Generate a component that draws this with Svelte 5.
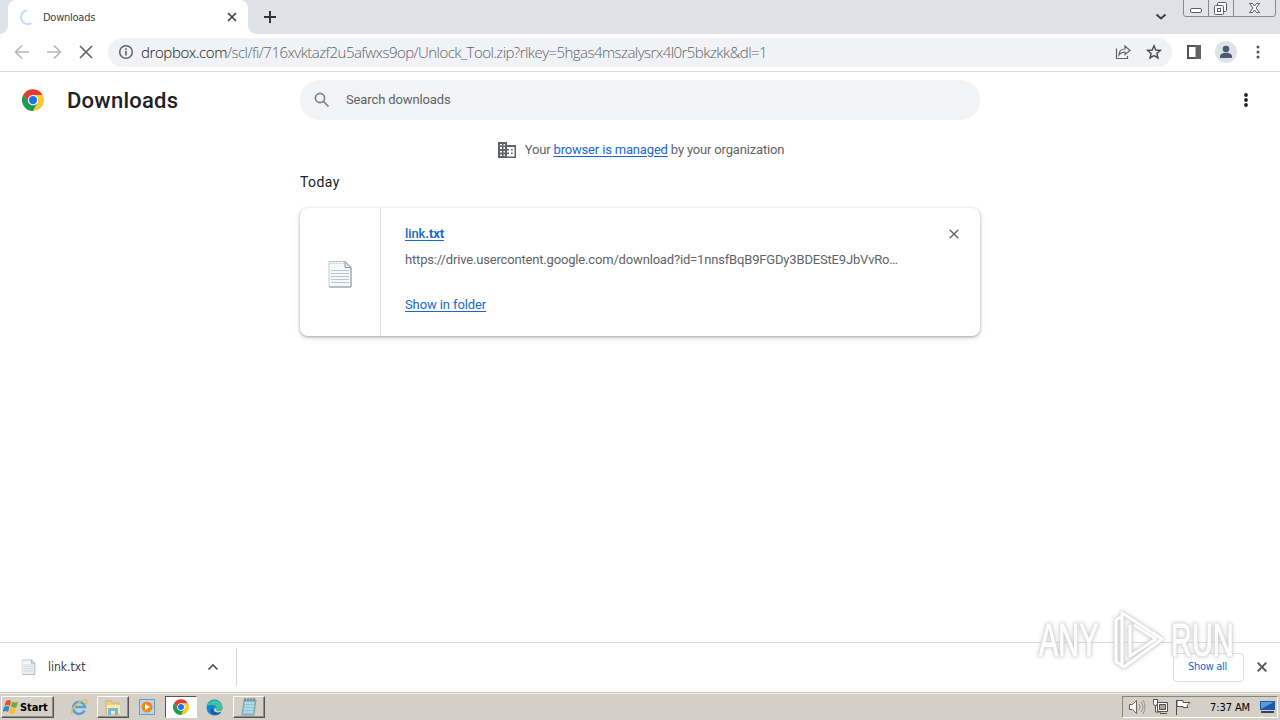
<script lang="ts">
	const tabTitle = 'Downloads';
	const host = 'dropbox.com';
	const path = '/scl/fi/716xvktazf2u5afwxs9op/Unlock_Tool.zip?rlkey=5hgas4mszalysrx4l0r5bkzkk&dl=1';
	const download = {
		name: 'link.txt',
		url: 'https://drive.usercontent.google.com/download?id=1nnsfBqB9FGDy3BDEStE9JbVvRo…'
	};
</script>

{#snippet chrome(size: number)}
	<svg width={size} height={size} viewBox="0 0 24 24">
		<path d="M12 6.5h10.7A12 12 0 0 1 12 24l4.8-9.2z" fill="#fcc934" />
		<path d="M1.6 6 7.2 14.8 12 17.5l4.5-2L12 24A12 12 0 0 1 1.6 6z" fill="#1e9b4c" />
		<path d="M1.6 6A12 12 0 0 1 22.4 6.5H12L7 15z" fill="#e33b2e" />
		<circle cx="12" cy="12" r="5.6" fill="#fff" />
		<circle cx="12" cy="12" r="4.5" fill="#1a73e8" />
	</svg>
{/snippet}

{#snippet page(width: number, height: number)}
	<svg {width} {height} viewBox="0 0 24 28">
		<path d="M1 1.5h16l6 6V27H1z" fill="#f5f8f9" stroke="#c5cacc" />
		<path d="M23 8v19H1.5" fill="none" stroke="#8f9a9f" />
		<path d="M17 1.5v6h6z" fill="#e2e6e8" stroke="#8e979b" />
		<path d="M3 10.5h18M3 13.5h18M3 16.5h18M3 19.5h18M3 22.5h18" stroke="#b9c6cd" />
		<path d="M3 1v4M6 1v4M9 1v4M12 1v4M15 1v4" stroke="#aaa" stroke-dasharray="1 1" />
	</svg>
{/snippet}

<main>
	<header class="tabs">
		<div class="edge"></div>
		<div class="tab">
			<svg class="spinner" width="16" height="16" viewBox="0 0 16 16">
				<path d="M7 1.200a7 7 0 1 0 4.500 13" fill="none" stroke="#cfd6fa" stroke-width="2" />
			</svg>
			<span>{tabTitle}</span>
			<svg width="10" height="10" viewBox="0 0 10 10"><path d="m1 1 8 8M9 1 1 9" stroke="#3c4043" stroke-width="1.7" /></svg>
		</div>
		<div class="edge right"></div>
		<svg class="plus" width="12" height="12" viewBox="0 0 12 12"><path d="M6 0v12M0 6h12" stroke="#303338" stroke-width="2" /></svg>
		<svg class="chevron" width="12" height="8" viewBox="0 0 12 8"><path d="m1.5 1.5 4.5 4 4.5-4" fill="none" stroke="#3c4043" stroke-width="2" /></svg>
		<svg class="window-buttons" width="93" height="17" viewBox="0 0 93 17">
			<path d="M.5 0v14q0 2.500 2.500 2.500h87q2.500 0 2.500-2.500V0M25.500 0v16.500M50.500 0v16.500" fill="#e2e4e9" stroke="#858990" />
			<g fill="#fff" stroke="#5a5d66">
				<rect x="7.500" y="8.500" width="11" height="4" rx="1.500" />
				<rect x="34.500" y="2.500" width="9" height="9" rx="1" />
				<rect x="31.500" y="5.500" width="9" height="9" rx="1" />
				<rect x="34.500" y="8.500" width="3" height="3" />
				<path d="M66.500 3.500h3l2 2.500 2-2.500h3l-3.500 4.500 3.500 4.500h-3l-2-2.500-2 2.500h-3L70 8z" />
			</g>
		</svg>
	</header>

	<nav>
		<svg width="16" height="16" viewBox="0 0 16 16" class="muted"><path d="M15 8H2M8 1.500 1.500 8 8 14.500" /></svg>
		<svg width="16" height="16" viewBox="0 0 16 16" class="muted"><path d="M1 8h13M8 1.500 14.500 8 8 14.500" /></svg>
		<svg width="16" height="16" viewBox="0 0 16 16" class="stop"><path d="m2 2 12 12M14 2 2 14" /></svg>
		<div class="omnibox">
			<svg width="16" height="16" viewBox="0 0 16 16" fill="none" stroke="#5f6368">
				<circle cx="8" cy="8" r="6.300" stroke-width="1.500" /><path d="M8 7v4.500M8 4.200v1.700" stroke-width="1.600" />
			</svg>
			<p class="url"><span class="host">{host}</span><span class="path">{path}</span></p>
			<svg width="18" height="16" viewBox="0 0 18 16" fill="none" stroke="#5f6368" stroke-width="1.200">
				<path d="M2.500 4.500v10h11V12M5 11c0-4 2.500-6 6-6V2l5 4.500-5 4V8c-3 0-4.700 1-6 3z" />
			</svg>
			<svg class="star" width="16" height="16" viewBox="0 0 16 16"><path d="m8 1.800 1.800 4.200 4.600.4-3.500 3 1.100 4.500L8 11.500l-4 2.400 1.100-4.500-3.500-3L6.200 6z" fill="none" stroke="#4c5056" stroke-width="1.500" /></svg>
		</div>
		<svg class="panel" width="14" height="14" viewBox="0 0 14 14"><path d="M1 1h12v12H1z" fill="#fff" stroke="#505357" stroke-width="2" /><path d="M8.500 0H14v14H8.500z" fill="#5f6368" /></svg>
		<svg class="avatar" width="22" height="22" viewBox="0 0 22 22">
			<circle cx="11" cy="11" r="11" fill="#dfe2e7" /><circle cx="11" cy="8" r="3.300" fill="#4d5872" /><path d="M5 17v-1.500c0-5 12-5 12 0V17z" fill="#4d5872" />
		</svg>
		<svg width="4" height="14" viewBox="0 0 4 14" fill="#505357"><circle cx="2" cy="2" r="1.500" /><circle cx="2" cy="7" r="1.500" /><circle cx="2" cy="12" r="1.500" /></svg>
	</nav>

	<section class="toolbar">
		<div class="brand">
			{@render chrome(22)}
			<h1>Downloads</h1>
		</div>
		<div class="search">
			<svg width="16" height="16" viewBox="0 0 16 16" fill="none" stroke="#7b7f84" stroke-width="1.700"><circle cx="6" cy="6" r="4.600" /><path d="m9.500 9.500 5 5" /></svg>
			<span>Search downloads</span>
		</div>
		<svg class="more" width="4" height="14" viewBox="0 0 4 14" fill="#202124"><circle cx="2" cy="2" r="1.900" /><circle cx="2" cy="7" r="1.900" /><circle cx="2" cy="12" r="1.900" /></svg>
	</section>

	<section class="content">
		<div class="managed">
			<svg width="18" height="16" viewBox="0 0 18 16" fill="#5f6368">
				<path fill-rule="evenodd" d="M0 0h9v3h9v13H0zM2 2v1.500h2V2zm3.500 0v1.500H7V2zM2 5v2h2V5zm3.500 0v2H7V5zM2 9v1.500h2V9zm3.500 0v1.500H7V9zM2 12.500V14h2v-1.500zm3.500 0V14H7v-1.500zM9 5v2h2v1.500H9v2h2V12H9v2.500h7.500V5zm4 2h1.700v1.500H13zm0 3.500h1.700V12H13z" />
			</svg>
			<p>Your <span class="link">browser is managed</span> by your organization</p>
		</div>
		<h2>Today</h2>
		<article>
			<div class="file-icon">{@render page(24, 28)}</div>
			<div class="details">
				<span class="link name">link<b>.txt</b></span>
				<p>{download.url}</p>
				<span class="link folder">Show in folder</span>
			</div>
			<svg class="dismiss" width="10" height="10" viewBox="0 0 10 10"><path d="m.7.7 8.600 8.600M9.300.7.7 9.300" stroke="#5f6368" stroke-width="1.400" /></svg>
		</article>
	</section>

	<footer class="shelf">
		<div class="item">
			{@render page(15, 16)}
			<span>{download.name}</span>
			<svg width="12" height="8" viewBox="0 0 12 8"><path d="M1.500 6.500 6 2l4.500 4.500" fill="none" stroke="#505357" stroke-width="1.700" /></svg>
		</div>
		<button>Show all</button>
		<svg width="10" height="10" viewBox="0 0 10 10"><path d="m.7.7 8.600 8.600M9.300.7.7 9.300" stroke="#505357" stroke-width="1.900" /></svg>
		<div class="watermark">
			<span>ANY</span>
			<svg width="60" height="64" viewBox="0 0 60 64" fill="none" stroke="#fff" stroke-width="3" stroke-linejoin="round">
				<path d="m14 9-5 3v42l6 3V5l40 26-38 28-4-2M23 17v31l26-17-22-14" />
			</svg>
			<span>RUN</span>
		</div>
	</footer>

	<footer class="taskbar">
		<div class="start">
			<svg width="16" height="16" viewBox="0 0 16 16">
				<path d="M3 2q3-2 5 0L7 7Q4 5 1.500 7z" fill="#e6532b" /><path d="M9 2.500q3 2 6 0L13.500 8Q11 9.500 8 7.500z" fill="#72aa35" />
				<path d="M1 8q3-2 5.500 0L5 13Q3 11-.5 13z" fill="#3a86c8" /><path d="M7.500 8.500q3 2 5.500.5l-1.500 5q-3 2-5.500-.5z" fill="#f4bd2d" />
			</svg>
			<b>Start</b>
		</div>
		<div class="task">
			<svg width="18" height="18" viewBox="0 0 18 18" fill="none">
				<path d="M14.500 12.500A6 6 0 1 1 15 9H5" stroke="#4ba6e0" stroke-width="2.500" /><path d="M2 16C-1 12 11 1 16 2c2 1 0 4-1 5" stroke="#e8bd4c" stroke-width="1.400" />
			</svg>
		</div>
		<div class="task raised">
			<svg width="18" height="17" viewBox="0 0 18 17">
				<path d="M2 2h5l1 2h7v11H2z" fill="#efd080" stroke="#d0b468" /><path d="M3 6h13v9H3z" fill="#fae9a8" /><path d="M4 16V9h10v7h-3v-4H7v4z" fill="#72b9df" />
			</svg>
		</div>
		<div class="task">
			<svg width="16" height="16" viewBox="0 0 16 16">
				<rect x=".5" y=".5" width="15" height="15" fill="#b7d6ed" stroke="#6b9cc0" /><circle cx="8" cy="8" r="5.500" fill="#f28618" /><path d="m6 4.700 5 3.300-5 3.300z" fill="#fff" />
			</svg>
		</div>
		<div class="task active">{@render chrome(16)}</div>
		<div class="task edge-browser">
			<svg width="17" height="17" viewBox="0 0 17 17">
				<circle cx="8.500" cy="8.500" r="8" fill="#1687d0" /><path d="M1 7C3 0 15-1 16.500 8c0 4-5 4.500-7 3 3-4-2-7-8.500-4z" fill="#42c49a" /><path d="M7 8c-2 4 3 7 8 5-4 6-12 2-10-3z" fill="#155c9e" /><path d="M9 8.500c2 1.500 0 3 3 3.500 2 .4 3.500-.5 5-1.500v1.500c-3 2-9 2-9-1z" fill="#d5d0c7" />
			</svg>
		</div>
		<div class="task raised">
			<svg width="16" height="18" viewBox="0 0 16 18">
				<path d="M3 2h12l-2 15H1z" fill="#8dc4d2" stroke="#7ba6b0" /><path d="M4 5h9M4 8h9M3 11h9M3 14h9" stroke="#d9f0f2" /><path d="M4 0v3M7 0v3M10 0v3M13 0v3" stroke="#59666b" />
			</svg>
		</div>
		<div class="tray">
			<svg width="18" height="16" viewBox="0 0 18 16" fill="#fff" stroke="#66645f"><path d="M1.500 5.500h3l4-4v13l-4-4h-3z" /><path d="M11 5q2 3 0 6M13 3q4 5 0 10M15 1q4 7 0 14" fill="none" stroke="#98958f" /></svg>
			<svg width="17" height="16" viewBox="0 0 17 16" fill="#fff" stroke="#55534f"><path d="M5.500 3.500h10v9h-10zM8 14.500h7M1.500.5v4q0 2 2 2t2-2v-4zM3.500 7v6H9" /><path d="M7.500 5.500h6v5h-6z" fill="#a8a59f" /></svg>
			<svg width="17" height="16" viewBox="0 0 17 16" fill="#fff" stroke="#55534f"><path d="M1.500 1v15M2 1.500h6v2h7l-3 3 1 2H8v-1H2z" /></svg>
			<time>7:37 AM</time>
			<svg class="desktop" width="16" height="14" viewBox="0 0 16 14"><path d="M0 1h15v9H0z" fill="#1e57a5" /><path d="M1 2h13L1 9z" fill="#569ce0" /><path d="M1 12h13" stroke="#34465e" stroke-width="2" /></svg>
		</div>
	</footer>
</main>

<style>
	:global(body) {
		margin: 0;
	}
	main {
		width: 1280px;
		height: 720px;
		overflow: hidden;
		display: flex;
		flex-direction: column;
		background: #fff;
		color: #202124;
		font-family: Roboto, 'Liberation Sans', sans-serif;
	}
	p,
	h1,
	h2 {
		margin: 0;
		white-space: nowrap;
	}
	svg {
		display: block;
		flex-shrink: 0;
	}
	.tabs {
		height: 34px;
		display: flex;
		align-items: flex-start;
		background: #dee1e8;
	}
	.edge {
		width: 8px;
		height: 34px;
		background: radial-gradient(circle at 0 0, transparent 7.5px, #fff 8px) bottom / 8px 8px no-repeat;
	}
	.right {
		transform: scaleX(-1);
	}
	.tab {
		box-sizing: border-box;
		width: 240px;
		height: 34px;
		padding: 0 11px 0 12px;
		display: flex;
		align-items: center;
		gap: 7px;
		border-radius: 8px 8px 0 0;
		background: #fff;
		font: 11px 'DejaVu Sans Condensed', 'DejaVu Sans', sans-serif;
		letter-spacing: -0.25px;
		color: #3c4043;
	}
	.tab span {
		flex: 1;
	}
	.plus {
		margin: 11px 0 0 8px;
	}
	.chevron {
		margin: 13px 16px 0 auto;
	}
	.window-buttons {
		margin-right: 4px;
	}
	nav {
		box-sizing: border-box;
		height: 38px;
		padding: 0 20px 1px 14px;
		display: flex;
		align-items: center;
		border-bottom: 1px solid #d9dbdf;
	}
	nav > svg {
		margin-right: 16px;
		fill: none;
	}
	.muted {
		stroke: #b5b7ba;
		stroke-width: 1.6;
	}
	.stop {
		stroke: #606367;
		stroke-width: 1.7;
	}
	nav .stop {
		margin-right: 14px;
	}
	.omnibox {
		box-sizing: border-box;
		width: 1064px;
		height: 29px;
		padding: 0 10px;
		display: flex;
		align-items: center;
		border-radius: 15px;
		background: #f0f2f5;
	}
	.url {
		flex: 1;
		margin-left: 7px;
		font: 300 15px 'Open Sans', sans-serif;
		letter-spacing: -0.55px;
		color: #5f6368;
	}
	.host {
		color: #101114;
		letter-spacing: -0.4px;
	}
	.star {
		margin-left: 14px;
	}
	nav .panel {
		margin: 0 14px 0 15px;
	}
	nav .avatar {
		margin-right: 19px;
	}
	nav > svg:last-child {
		margin-right: 0;
		fill: #505357;
	}
	.toolbar {
		height: 56px;
		display: flex;
		align-items: center;
	}
	.brand {
		box-sizing: border-box;
		width: 300px;
		padding-left: 22px;
		display: flex;
		align-items: center;
		gap: 23px;
	}
	h1 {
		font-size: 22px;
		font-weight: 500;
		letter-spacing: 0.25px;
	}
	.search {
		box-sizing: border-box;
		width: 680px;
		height: 40px;
		padding-left: 14px;
		display: flex;
		align-items: center;
		gap: 16px;
		border-radius: 20px;
		background: #f1f3f4;
		color: #5f6368;
		font-size: 13px;
		letter-spacing: -0.12px;
	}
	.search span {
		padding-bottom: 2px;
	}
	.more {
		margin-left: 264px;
	}
	.content {
		width: 680px;
		margin: 0 auto;
		flex: 1;
	}
	.managed {
		height: 44px;
		padding-left: 2px;
		display: flex;
		align-items: center;
		justify-content: center;
		gap: 9px;
		font-size: 13px;
		letter-spacing: -0.17px;
		color: #5f6368;
	}
	.managed p {
		padding-bottom: 2px;
	}
	.link {
		color: #1967d2;
		text-decoration: underline;
		text-underline-offset: 2px;
	}
	h2 {
		font-size: 14px;
		font-weight: 400;
		line-height: 20px;
		letter-spacing: 0.4px;
	}
	article {
		height: 128px;
		margin-top: 16px;
		display: flex;
		border-radius: 8px;
		box-shadow: 0 1px 3px #3c404366, 0 2px 6px #3c404322;
		font-size: 13px;
	}
	.file-icon {
		width: 80px;
		padding-top: 4px;
		display: flex;
		align-items: center;
		justify-content: center;
		border-right: 1px solid #dadce0;
		box-sizing: content-box;
		height: 124px;
	}
	.details {
		flex: 1;
		padding: 16px 0 0 24px;
		display: flex;
		flex-direction: column;
		align-items: flex-start;
		line-height: 20px;
		letter-spacing: -0.1px;
	}
	.details p {
		margin-top: 6px;
		color: #5f6368;
		letter-spacing: -0.17px;
	}
	.name {
		font-weight: 500;
	}
	.folder {
		margin-top: 25px;
	}
	.dismiss {
		margin: 21px 21px 0 0;
	}
	.shelf {
		position: relative;
		box-sizing: border-box;
		height: 50px;
		padding: 0 13px 1px 0;
		display: flex;
		align-items: center;
		border-top: 1px solid #d5d6d8;
	}
	.item {
		box-sizing: border-box;
		width: 237px;
		height: 38px;
		padding: 0 17px 0 21px;
		display: flex;
		align-items: center;
		border-right: 1px solid #d5d6d8;
		font: 12px 'DejaVu Sans Condensed', 'DejaVu Sans', sans-serif;
		color: #3c4043;
	}
	.item span {
		flex: 1;
		margin-left: 12px;
	}
	button {
		width: 71px;
		height: 29px;
		margin: 0 13px 0 auto;
		padding: 0 2px 2px 0;
		border: 1px solid #dadce0;
		border-radius: 4px;
		background: #fff;
		color: #1967d2;
		font: 11px 'DejaVu Sans Condensed', 'DejaVu Sans', sans-serif;
		letter-spacing: -0.3px;
	}
	.watermark {
		position: absolute;
		top: -35px;
		left: 1039px;
		display: flex;
		align-items: center;
		gap: 4px;
		color: #fffffff0;
		font: 46px/34px 'Liberation Sans', sans-serif;
		-webkit-text-stroke: 1px #fff;
		filter: drop-shadow(0 0 1px #ccc) drop-shadow(0 0 2px #ccc);
	}
	.watermark span {
		width: 64px;
		transform: scaleX(0.63);
		transform-origin: left;
	}
	.taskbar {
		box-sizing: border-box;
		height: 28px;
		padding: 2px 2px 0 1px;
		display: flex;
		align-items: flex-start;
		border-top: 1px solid #c9c6b8;
		box-shadow: inset 0 1px #f2f0ea;
		background: #d4d0c8;
		font: 11px 'DejaVu Sans Condensed', 'DejaVu Sans', sans-serif;
	}
	.start,
	.raised {
		box-sizing: border-box;
		border: 1px solid;
		border-color: #fff #55534f #55534f #fff;
		box-shadow: inset -1px -1px #918e87;
	}
	.taskbar > div {
		margin-top: 1px;
	}
	.start {
		width: 53px;
		height: 22px;
		margin-right: 9px;
		padding-left: 1px;
		display: flex;
		align-items: center;
		gap: 1px;
		color: #000;
		letter-spacing: -0.1px;
	}
	.task {
		box-sizing: border-box;
		width: 32px;
		height: 22px;
		margin-right: 2px;
		display: flex;
		align-items: center;
		justify-content: center;
	}
	.edge-browser {
		padding-right: 2px;
	}
	.active {
		border: 1px solid;
		border-color: #55534f #fff #fff #55534f;
		background: #fff;
	}
	.tray {
		box-sizing: border-box;
		width: 156px;
		height: 22px;
		margin-left: auto;
		padding: 0 1px 0 5px;
		display: flex;
		align-items: center;
		gap: 6px;
		border: 1px solid;
		border-color: #88857e #fff #fff #88857e;
		color: #000;
	}
	time {
		flex: 1;
		padding-right: 4px;
		text-align: right;
		letter-spacing: -0.1px;
		white-space: nowrap;
	}
</style>
